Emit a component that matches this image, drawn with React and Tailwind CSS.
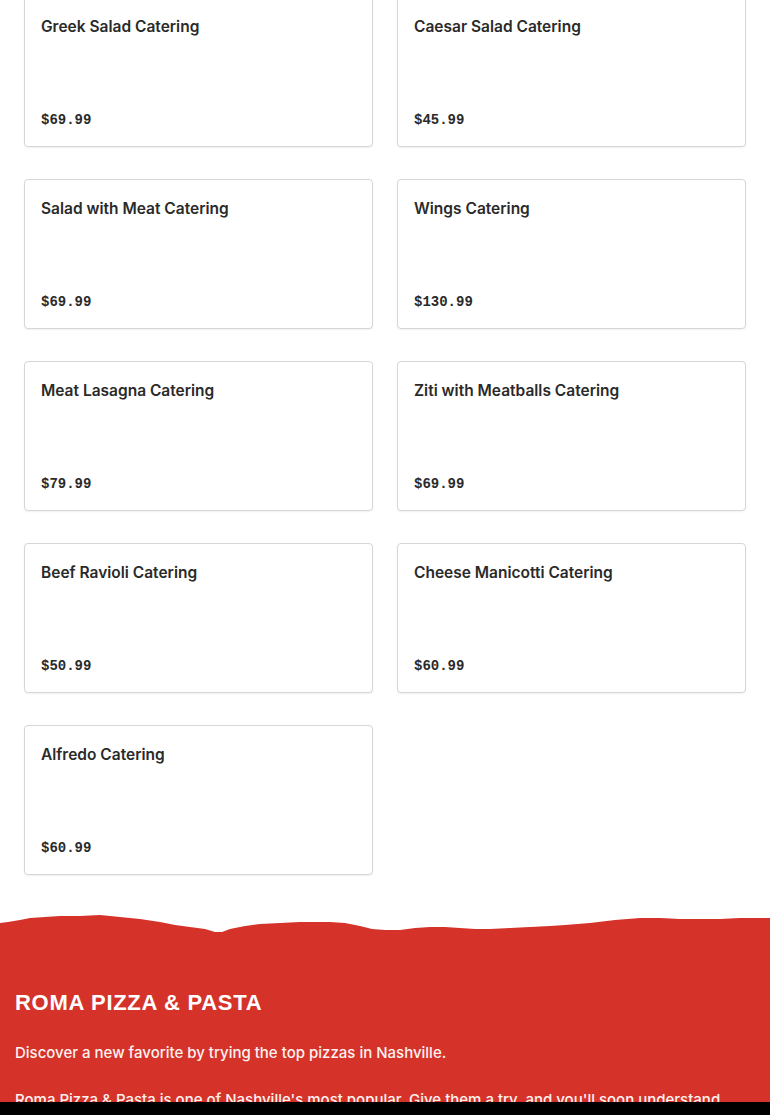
import React from "react";

const items = [
  { name: "Greek Salad Catering", price: "$69.99" },
  { name: "Caesar Salad Catering", price: "$45.99" },
  { name: "Salad with Meat Catering", price: "$69.99" },
  { name: "Wings Catering", price: "$130.99" },
  { name: "Meat Lasagna Catering", price: "$79.99" },
  { name: "Ziti with Meatballs Catering", price: "$69.99" },
  { name: "Beef Ravioli Catering", price: "$50.99" },
  { name: "Cheese Manicotti Catering", price: "$60.99" },
  { name: "Alfredo Catering", price: "$60.99" },
];

const MenuCard = ({ item }) => (
  <div className="h-[150px] flex flex-col justify-between bg-white border border-[#d6d6d6] rounded-[4px] shadow-[0_1px_2px_rgba(0,0,0,0.06)] px-4 pt-[17px] pb-[16px]">
    <h3 className="text-[15.5px] leading-6 font-semibold text-[#2a2a2a] font-['Inter',sans-serif]">
      {item.name}
    </h3>
    <span className="text-[14px] leading-5 font-bold text-[#2a2a2a] font-['Liberation_Mono',monospace]">
      {item.price}
    </span>
  </div>
);

// ragged paper edge on top of the footer
const TornEdge = () => (
  <svg
    className="block w-full h-[30px]"
    viewBox="0 0 770 30"
    preserveAspectRatio="none"
  >
    <path
      fill="#d5322a"
      d="M0 13 L8 12 L20 10 L30 8 L45 7 L60 6 L80 6 L100 5 L120 7 L140 9 L160 12 L175 15 L190 17 L205 19 L215 22 L222 22 L230 19 L245 16 L260 14 L280 13 L300 12 L330 12 L345 13 L360 16 L372 19 L385 20 L400 20 L415 18 L430 17 L445 17 L460 18 L475 19 L490 19 L510 18 L530 17 L550 16 L565 15 L590 13 L615 10 L640 8 L660 8 L680 9 L700 9 L720 9 L740 8 L755 8 L770 8 L770 30 L0 30 Z"
    />
  </svg>
);

export default function App() {
  return (
    <div className="min-h-screen bg-white font-['Inter',sans-serif] overflow-hidden">
      <div className="px-6 -mt-[3px]">
        <div className="grid grid-cols-2 gap-x-6 gap-y-8">
          {items.map((item) => (
            <MenuCard key={item.name} item={item} />
          ))}
        </div>
      </div>

      <footer className="mt-[35px]">
        <TornEdge />
        <div className="bg-[#d5322a] px-[15px] pt-[49px] pb-10 text-white">
          <h2 className="text-[22px] leading-7 font-black tracking-[0.7px] font-['Liberation_Sans',sans-serif]">
            ROMA PIZZA &amp; PASTA
          </h2>
          <p className="mt-[24px] text-[15px] leading-6 font-medium text-[#fdf2f0]">
            Discover a new favorite by trying the top pizzas in Nashville.
          </p>
          <p className="mt-[23px] pr-[15px] text-[15px] leading-6 font-medium text-[#fdf2f0]">
            Roma Pizza &amp; Pasta is one of Nashville's most popular. Give them a try, and you'll soon understand
            why locals keep coming back for more.
          </p>
        </div>
      </footer>

      <div className="fixed bottom-0 left-0 right-0 h-[13px] bg-black" />
    </div>
  );
}
